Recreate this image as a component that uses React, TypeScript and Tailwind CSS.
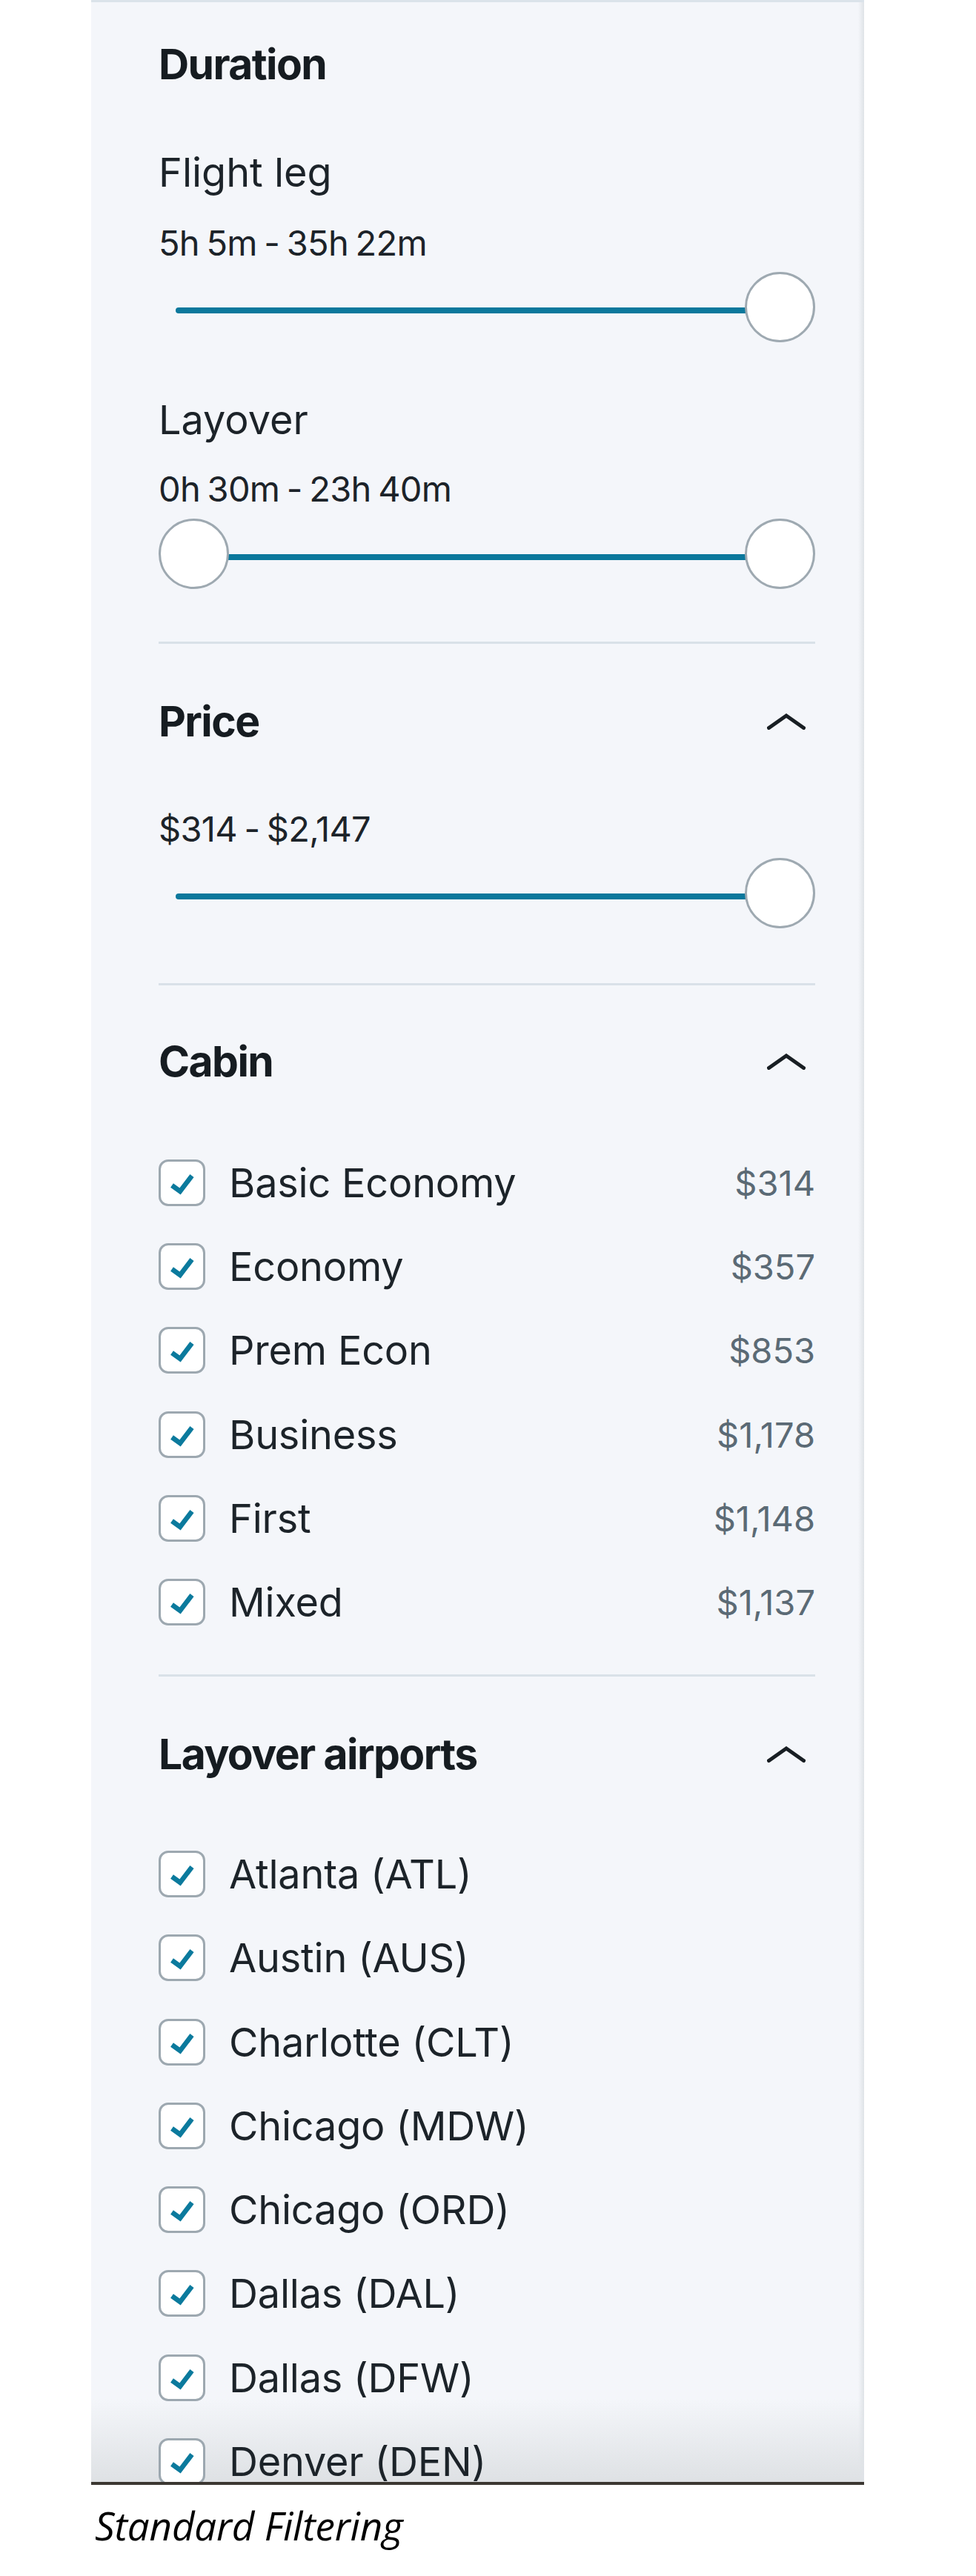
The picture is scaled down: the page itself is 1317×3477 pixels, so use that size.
import React from "react";

function Chevron() {
  return (
    <svg width="52" height="22" viewBox="0 0 52 22" className="mr-[13px]" fill="none">
      <path d="M2.5 19.5 L26 3 L49.5 19.5" stroke="#181e23" strokeWidth="5" strokeLinecap="square" strokeLinejoin="miter" />
    </svg>
  );
}

function Checkbox() {
  return (
    <div className="w-[63px] h-[63px] shrink-0 rounded-[13px] border-[3px] border-[#9da8b0] bg-white">
      <svg width="57" height="57" viewBox="0 0 57 57" fill="none">
        <path d="M15 32 L26 40 L42 19" stroke="#0b7a9d" strokeWidth="6.5" strokeLinejoin="miter" />
      </svg>
    </div>
  );
}

function Thumb({ side }: { side: "left" | "right" }) {
  return (
    <div
      className={
        "absolute top-0 w-[95px] h-[95px] rounded-full bg-white border-[3px] border-[#9ea9b1] " +
        (side === "left" ? "left-0" : "right-0")
      }
    />
  );
}

function Slider({ double }: { double?: boolean }) {
  return (
    <div className="relative h-[95px]">
      {double ? (
        <div className="absolute top-[48px] h-[8px] left-[60px] right-[60px] bg-[#0b789c]" />
      ) : (
        <div className="absolute top-[48px] h-[8px] left-[23px] right-[60px] rounded-l-full bg-[#0b789c]" />
      )}
      {double && <Thumb side="left" />}
      <Thumb side="right" />
    </div>
  );
}

function Heading({ children, chevron }: { children: React.ReactNode; chevron?: boolean }) {
  return (
    <div className="flex h-[56px] items-center justify-between">
      <h2 className="text-[57px] leading-[56px] font-bold tracking-[-1.6px] text-[#161c21]">{children}</h2>
      {chevron && <Chevron />}
    </div>
  );
}

function Label({ children, className = "" }: { children: React.ReactNode; className?: string }) {
  return <div className={"text-[54px] leading-[54px] text-[#1c2329] " + className}>{children}</div>;
}

function Small({ children, className = "" }: { children: React.ReactNode; className?: string }) {
  return (
    <div className={"text-[47px] leading-[47px] tracking-[-0.7px] [word-spacing:-3px] text-[#1c2329] " + className}>
      {children}
    </div>
  );
}

function Divider({ className = "" }: { className?: string }) {
  return <div className={"h-[3px] bg-[#d9e1e8] " + className} />;
}

function CheckRow({ label, price }: { label: string; price?: string }) {
  return (
    <div className="flex h-[63px] items-center">
      <Checkbox />
      <span className="ml-[32px] text-[54px] leading-[63px] tracking-[-0.2px] text-[#1c2329] whitespace-nowrap">{label}</span>
      {price && <span className="ml-auto text-[47px] leading-[63px] text-[#5b6a75]">{price}</span>}
    </div>
  );
}

const cabins: [string, string][] = [
  ["Basic Economy", "$314"],
  ["Economy", "$357"],
  ["Prem Econ", "$853"],
  ["Business", "$1,178"],
  ["First", "$1,148"],
  ["Mixed", "$1,137"],
];

const airports = [
  "Atlanta (ATL)",
  "Austin (AUS)",
  "Charlotte (CLT)",
  "Chicago (MDW)",
  "Chicago (ORD)",
  "Dallas (DAL)",
  "Dallas (DFW)",
  "Denver (DEN)",
];

export default function App() {
  return (
    <div className="w-[1317px] h-[3477px] bg-white font-['Inter',sans-serif]">
      <div className="relative ml-[123px] w-[1043px] h-[3350px] overflow-hidden bg-[linear-gradient(to_bottom,#f4f6fa_0px,#f4f6fa_3235px,#dee1e4_3347px)] border-t-[3px] border-[#dbe3ea] pl-[91px] pr-[66px] pt-[56px]">
        <Heading>Duration</Heading>
        <Label className="mt-[91px]">Flight leg</Label>
        <Small className="mt-[44px]">5h 5m - 35h 22m</Small>
        <div className="mt-[16px]">
          <Slider />
        </div>
        <Label className="mt-[78px]">Layover</Label>
        <Small className="mt-[42px]">0h 30m - 23h 40m</Small>
        <div className="mt-[17px]">
          <Slider double />
        </div>
        <Divider className="mt-[71px]" />

        <div className="mt-[77px]">
          <Heading chevron>Price</Heading>
        </div>
        <Small className="mt-[93px]">$314 - $2,147</Small>
        <div className="mt-[16px]">
          <Slider />
        </div>
        <Divider className="mt-[74px]" />

        <div className="mt-[75px]">
          <Heading chevron>Cabin</Heading>
        </div>
        <div className="mt-[104px] flex flex-col gap-[50.2px]">
          {cabins.map(([l, p]) => (
            <CheckRow key={l} label={l} price={p} />
          ))}
        </div>
        <Divider className="mt-[66px]" />

        <div className="mt-[77px]">
          <Heading chevron>Layover airports</Heading>
        </div>
        <div className="mt-[102px] flex flex-col gap-[50.3px]">
          {airports.map((a) => (
            <CheckRow key={a} label={a} />
          ))}
        </div>

        <div className="pointer-events-none absolute right-0 top-0 h-full w-[8px] bg-gradient-to-r from-transparent to-[#dfe3e7]" />
      </div>
      <div className="ml-[123px] w-[1043px] h-[4px] bg-[#3b3732]" />
      <div className="ml-[128px] mt-[28px] text-[53px] leading-[53px] italic tracking-[-0.2px] text-black font-['Open_Sans',sans-serif]">
        Standard Filtering
      </div>
    </div>
  );
}
